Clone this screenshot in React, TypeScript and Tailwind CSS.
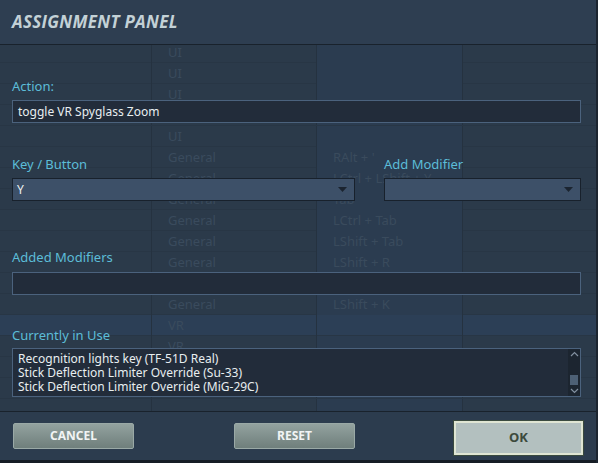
const rows: [string, string][] = [
  ["UI", ""],
  ["UI", ""],
  ["UI", ""],
  ["", ""],
  ["UI", ""],
  ["General", "RAlt + '"],
  ["General", "LCtrl + LShift + Y"],
  ["General", "Tab"],
  ["General", "LCtrl + Tab"],
  ["General", "LShift + Tab"],
  ["General", "LShift + R"],
  ["", ""],
  ["General", "LShift + K"],
  ["VR", ""],
  ["VR", ""],
  ["", ""],
  ["", ""],
  ["", ""],
  ["", ""],
];

const inUse = [
  "Recognition lights key (TF-51D Real)",
  "Stick Deflection Limiter Override (Su-33)",
  "Stick Deflection Limiter Override (MiG-29C)",
];

function Arrow() {
  return (
    <svg width="9" height="5" viewBox="0 0 9 5" className="shrink-0">
      <path d="M0 0h9L4.5 5z" fill="#1b2430" />
    </svg>
  );
}

function Label({ children }: { children: React.ReactNode }) {
  return <div className="h-[18px] leading-[18px] text-[13px] text-[#5cbdd8]">{children}</div>;
}

export default function App() {
  return (
    <div
      className="relative w-[598px] h-[463px] overflow-hidden bg-[#2b3a4a]"
      style={{ fontFamily: '"Noto Sans", "DejaVu Sans", sans-serif' }}
    >
      {/* key binding table underneath the panel */}
      <div className="pt-[42px] h-full">
        {rows.map(([cat, key], i) => (
          <div
            key={i}
            className={
              "grid grid-cols-[152px_165px_146px_1fr] h-[21px] border-b border-[#283645] text-[13px] leading-[21px] text-[#3a4b5d] " +
              (i === 13 ? "bg-[#2c3f56]" : "")
            }
          >
            <div className="border-r border-[#253240]" />
            <div className="border-r border-[#253240] pl-[16px]">{cat}</div>
            <div className={"border-r border-[#253240] pl-[16px] " + (i === 13 ? "" : "bg-[#2b3c50]")}>{key}</div>
            <div />
          </div>
        ))}
      </div>

      {/* assignment panel */}
      <div className="absolute inset-0 flex flex-col border-r-[2px] border-[#1c2530]">
        <div className="h-[45px] shrink-0 bg-[#2e3e51] border-b border-[#19222c] flex items-center pl-[12px]">
          <span
            className="text-[17px] font-bold italic tracking-[0.3px] text-[#c3d1d6]"
            style={{ fontFamily: '"Open Sans", "DejaVu Sans", sans-serif' }}
          >
            ASSIGNMENT PANEL
          </span>
        </div>

        <div className="flex-1 px-[12px] pr-[15px] pt-[32px]">
          <Label>Action:</Label>
          <div className="mt-[5px] h-[23px] bg-[#222c3a] border border-[#4b627d] px-[5px] text-[12px] leading-[21px] text-[#e8eef0]">
            toggle VR Spyglass Zoom
          </div>

          <div className="mt-[32px] flex gap-[29px]">
            <div className="w-[343px]">
              <Label>Key / Button</Label>
              <div className="mt-[5px] h-[23px] bg-[#3d5068] border border-[#18212c] flex items-center justify-between pl-[4px] pr-[7px] text-[12px] text-[#eef2f3]">
                <span>Y</span>
                <Arrow />
              </div>
            </div>
            <div className="flex-1">
              <Label>Add Modifier</Label>
              <div className="mt-[5px] h-[23px] bg-[#3d5068] border border-[#18212c] flex items-center justify-end pr-[7px]">
                <Arrow />
              </div>
            </div>
          </div>

          <div className="mt-[47px]">
            <Label>Added Modifiers</Label>
          </div>
          <div className="mt-[6px] h-[23px] bg-[#222c3a] border border-[#4b627d]" />

          <div className="mt-[31px]">
            <Label>Currently in Use</Label>
          </div>
          <div className="mt-[4px] h-[49px] bg-[#222c3a] border border-[#4b627d] flex">
            <div className="flex-1 pl-[5px] pt-[3px] text-[12px] leading-[14px] text-[#e8eef0]">
              {inUse.map((t) => (
                <div key={t}>{t}</div>
              ))}
            </div>
            <div className="w-[12px] bg-[#1c2530] flex flex-col items-center justify-between py-[2px]">
              <svg width="9" height="6" viewBox="0 0 9 6">
                <path d="M1 5l3.5-3.5L8 5" stroke="#8290a0" strokeWidth="1.2" fill="none" />
              </svg>
              <div className="w-[8px] h-[10px] bg-[#4d6075] mt-[14px]" />
              <svg width="9" height="6" viewBox="0 0 9 6">
                <path d="M1 1l3.5 3.5L8 1" stroke="#8290a0" strokeWidth="1.2" fill="none" />
              </svg>
            </div>
          </div>
        </div>

        <div className="h-[52px] shrink-0 border-t border-[#19222c] bg-[#2c3c4e] flex items-start pl-[13px] pr-[13px] pt-[9px] border-b-[3px] border-b-[#161d25]">
          <button className="mt-[2px] w-[121px] h-[26px] rounded-[2px] border border-[#9aa9a6] bg-gradient-to-b from-[#93a29f] to-[#6f7f7c] text-[12px] font-bold text-[#f1f4f4]">
            CANCEL
          </button>
          <button className="ml-[100px] mt-[2px] w-[121px] h-[26px] rounded-[2px] border border-[#9aa9a6] bg-gradient-to-b from-[#93a29f] to-[#6f7f7c] text-[12px] font-bold text-[#f1f4f4]">
            RESET
          </button>
          <button className="ml-auto w-[129px] h-[34px] bg-[#b3c0bf] border-[2px] border-[#dfe5d3] outline outline-1 outline-[#3a4a3e] text-[13px] font-bold text-[#3c4a3c]">
            OK
          </button>
        </div>
      </div>
    </div>
  );
}
